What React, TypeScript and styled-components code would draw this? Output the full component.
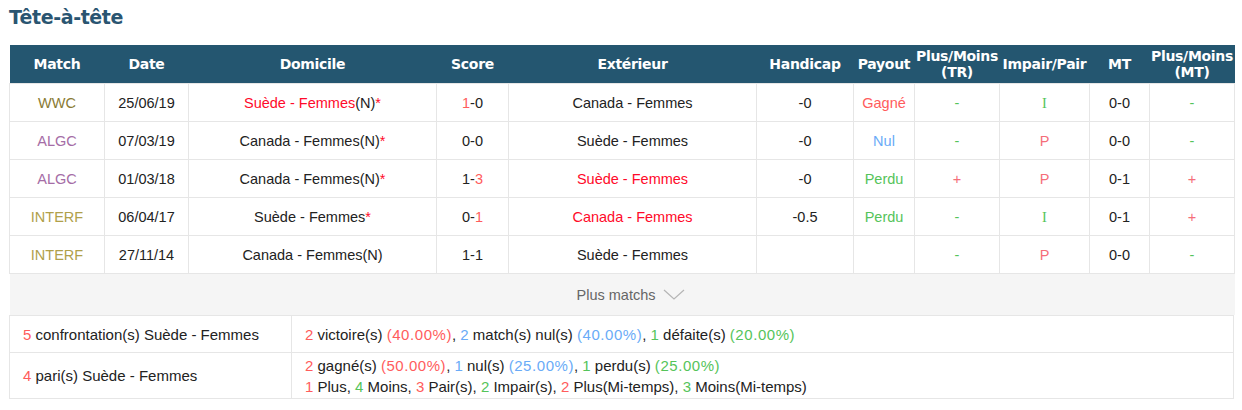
import React from "react";
import styled, { createGlobalStyle } from "styled-components";

const Global = createGlobalStyle`
  body { margin: 0; background: #fff; font-family: "Liberation Sans", Arial, sans-serif; }
`;

const Page = styled.div`
  padding: 5px 8px 0 9px;
  width: 1225px;
`;

const Title = styled.h2`
  margin: 0 0 15px 0;
  font-family: "DejaVu Sans", Tahoma, sans-serif;
  font-weight: bold;
  font-size: 19px;
  line-height: 25px;
  color: #2a5571;
  letter-spacing: -0.4px;
`;

const Table = styled.table`
  width: 1225px;
  border-collapse: collapse;
  table-layout: fixed;
  font-size: 14.5px;
  line-height: 20px;
  color: #222;
`;

const Th = styled.th`
  background: #245670;
  color: #fff;
  font-family: "DejaVu Sans", Tahoma, sans-serif;
  font-weight: bold;
  font-size: 14px;
  line-height: 16px;
  height: 38px;
  padding: 0;
  text-align: center;
  white-space: nowrap;
  letter-spacing: -0.3px;
`;

const Td = styled.td`
  height: 37px;
  padding: 0;
  text-align: center;
  border: 1px solid #e6e6e6;
  white-space: nowrap;
`;

const C = styled.span<{ $c: string }>`
  color: ${(p) => p.$c};
`;

const Pct = styled.span<{ $c: string }>`
  color: ${(p) => p.$c};
  letter-spacing: 0.55px;
`;

const MoreCell = styled.td`
  height: 41px;
  background: #f5f5f5;
  text-align: center;
  color: #666;
  padding: 0;
`;

const MoreInner = styled.span`
  display: inline-flex;
  align-items: center;
  gap: 8px;
  margin-left: 18px;
`;

const SumTable = styled.table`
  width: 1225px;
  border-collapse: collapse;
  table-layout: fixed;
  font-size: 15px;
  color: #222;
`;

const SumTd = styled.td<{ $h: number }>`
  border: 1px solid #e6e6e6;
  height: ${(p) => p.$h}px;
  padding: 0 0 0 13px;
  line-height: 21px;
  white-space: nowrap;
`;

const RED = "#ff5c5c";
const HOME = "#ff0a2a";
const BLUE = "#6aabf7";
const GREEN = "#55c45a";
const PINK = "#f56e7a";

const matchColor: Record<string, string> = {
  WWC: "#8a7b34",
  ALGC: "#a56da6",
  INTERF: "#b0a04a",
};

type Row = {
  m: string;
  d: string;
  home: React.ReactNode;
  score: React.ReactNode;
  away: React.ReactNode;
  hc: string;
  pay: React.ReactNode;
  ou: React.ReactNode;
  oe: React.ReactNode;
  mt: string;
  ou2: React.ReactNode;
};

const dash = <C $c={GREEN}>-</C>;
const plus = <C $c={PINK}>+</C>;
const I = <C $c={GREEN} style={{ fontFamily: '"Liberation Serif", serif' }}>I</C>;
const P = <C $c={PINK}>P</C>;
const star = <C $c={HOME}>*</C>;

const rows: Row[] = [
  {
    m: "WWC", d: "25/06/19",
    home: <><C $c={HOME}>Suède - Femmes</C>(N){star}</>,
    score: <><C $c={RED}>1</C>-0</>,
    away: "Canada - Femmes", hc: "-0",
    pay: <C $c={RED}>Gagné</C>, ou: dash, oe: I, mt: "0-0", ou2: dash,
  },
  {
    m: "ALGC", d: "07/03/19",
    home: <>Canada - Femmes(N){star}</>,
    score: "0-0", away: "Suède - Femmes", hc: "-0",
    pay: <C $c={BLUE}>Nul</C>, ou: dash, oe: P, mt: "0-0", ou2: dash,
  },
  {
    m: "ALGC", d: "01/03/18",
    home: <>Canada - Femmes(N){star}</>,
    score: <>1-<C $c={RED}>3</C></>,
    away: <C $c={HOME}>Suède - Femmes</C>, hc: "-0",
    pay: <C $c={GREEN}>Perdu</C>, ou: plus, oe: P, mt: "0-1", ou2: plus,
  },
  {
    m: "INTERF", d: "06/04/17",
    home: <>Suède - Femmes{star}</>,
    score: <>0-<C $c={RED}>1</C></>,
    away: <C $c={HOME}>Canada - Femmes</C>, hc: "-0.5",
    pay: <C $c={GREEN}>Perdu</C>, ou: dash, oe: I, mt: "0-1", ou2: plus,
  },
  {
    m: "INTERF", d: "27/11/14",
    home: "Canada - Femmes(N)",
    score: "1-1", away: "Suède - Femmes", hc: "",
    pay: "", ou: dash, oe: P, mt: "0-0", ou2: dash,
  },
];

const widths = [95, 84, 248, 72, 248, 97, 61, 85, 90, 60, 85];

const Chevron = () => (
  <svg width="22" height="12" viewBox="0 0 22 12" fill="none">
    <path d="M1 1 L11 10 L21 1" stroke="#b5b5b5" strokeWidth="1.2" />
  </svg>
);

export default function App() {
  return (
    <Page>
      <Global />
      <Title>Tête-à-tête</Title>
      <Table>
        <colgroup>
          {widths.map((w, i) => (
            <col key={i} style={{ width: w }} />
          ))}
        </colgroup>
        <thead>
          <tr>
            <Th>Match</Th>
            <Th>Date</Th>
            <Th>Domicile</Th>
            <Th>Score</Th>
            <Th>Extérieur</Th>
            <Th>Handicap</Th>
            <Th>Payout</Th>
            <Th>Plus/Moins<br />(TR)</Th>
            <Th>Impair/Pair</Th>
            <Th>MT</Th>
            <Th>Plus/Moins<br />(MT)</Th>
          </tr>
        </thead>
        <tbody>
          {rows.map((r, i) => (
            <tr key={i}>
              <Td><C $c={matchColor[r.m]}>{r.m}</C></Td>
              <Td>{r.d}</Td>
              <Td>{r.home}</Td>
              <Td>{r.score}</Td>
              <Td>{r.away}</Td>
              <Td>{r.hc}</Td>
              <Td>{r.pay}</Td>
              <Td>{r.ou}</Td>
              <Td>{r.oe}</Td>
              <Td>{r.mt}</Td>
              <Td>{r.ou2}</Td>
            </tr>
          ))}
          <tr>
            <MoreCell colSpan={11}>
              <MoreInner>
                Plus matchs <Chevron />
              </MoreInner>
            </MoreCell>
          </tr>
        </tbody>
      </Table>
      <SumTable>
        <colgroup>
          <col style={{ width: 282 }} />
          <col />
        </colgroup>
        <tbody>
          <tr>
            <SumTd $h={36}>
              <C $c={RED}>5</C> confrontation(s) Suède - Femmes
            </SumTd>
            <SumTd $h={36}>
              <C $c={RED}>2</C> victoire(s) <Pct $c={RED}>(40.00%)</Pct>,{" "}
              <C $c={BLUE}>2</C> match(s) nul(s) <Pct $c={BLUE}>(40.00%)</Pct>,{" "}
              <C $c={GREEN}>1</C> défaite(s) <Pct $c={GREEN}>(20.00%)</Pct>
            </SumTd>
          </tr>
          <tr>
            <SumTd $h={45}>
              <C $c={RED}>4</C> pari(s) Suède - Femmes
            </SumTd>
            <SumTd $h={45}>
              <C $c={RED}>2</C> gagné(s) <Pct $c={RED}>(50.00%)</Pct>,{" "}
              <C $c={BLUE}>1</C> nul(s) <Pct $c={BLUE}>(25.00%)</Pct>,{" "}
              <C $c={GREEN}>1</C> perdu(s) <Pct $c={GREEN}>(25.00%)</Pct>
              <br />
              <C $c={RED}>1</C> Plus, <C $c={GREEN}>4</C> Moins,{" "}
              <C $c={RED}>3</C> Pair(s), <C $c={GREEN}>2</C> Impair(s),{" "}
              <C $c={RED}>2</C> Plus(Mi-temps), <C $c={GREEN}>3</C> Moins(Mi-temps)
            </SumTd>
          </tr>
        </tbody>
      </SumTable>
    </Page>
  );
}
